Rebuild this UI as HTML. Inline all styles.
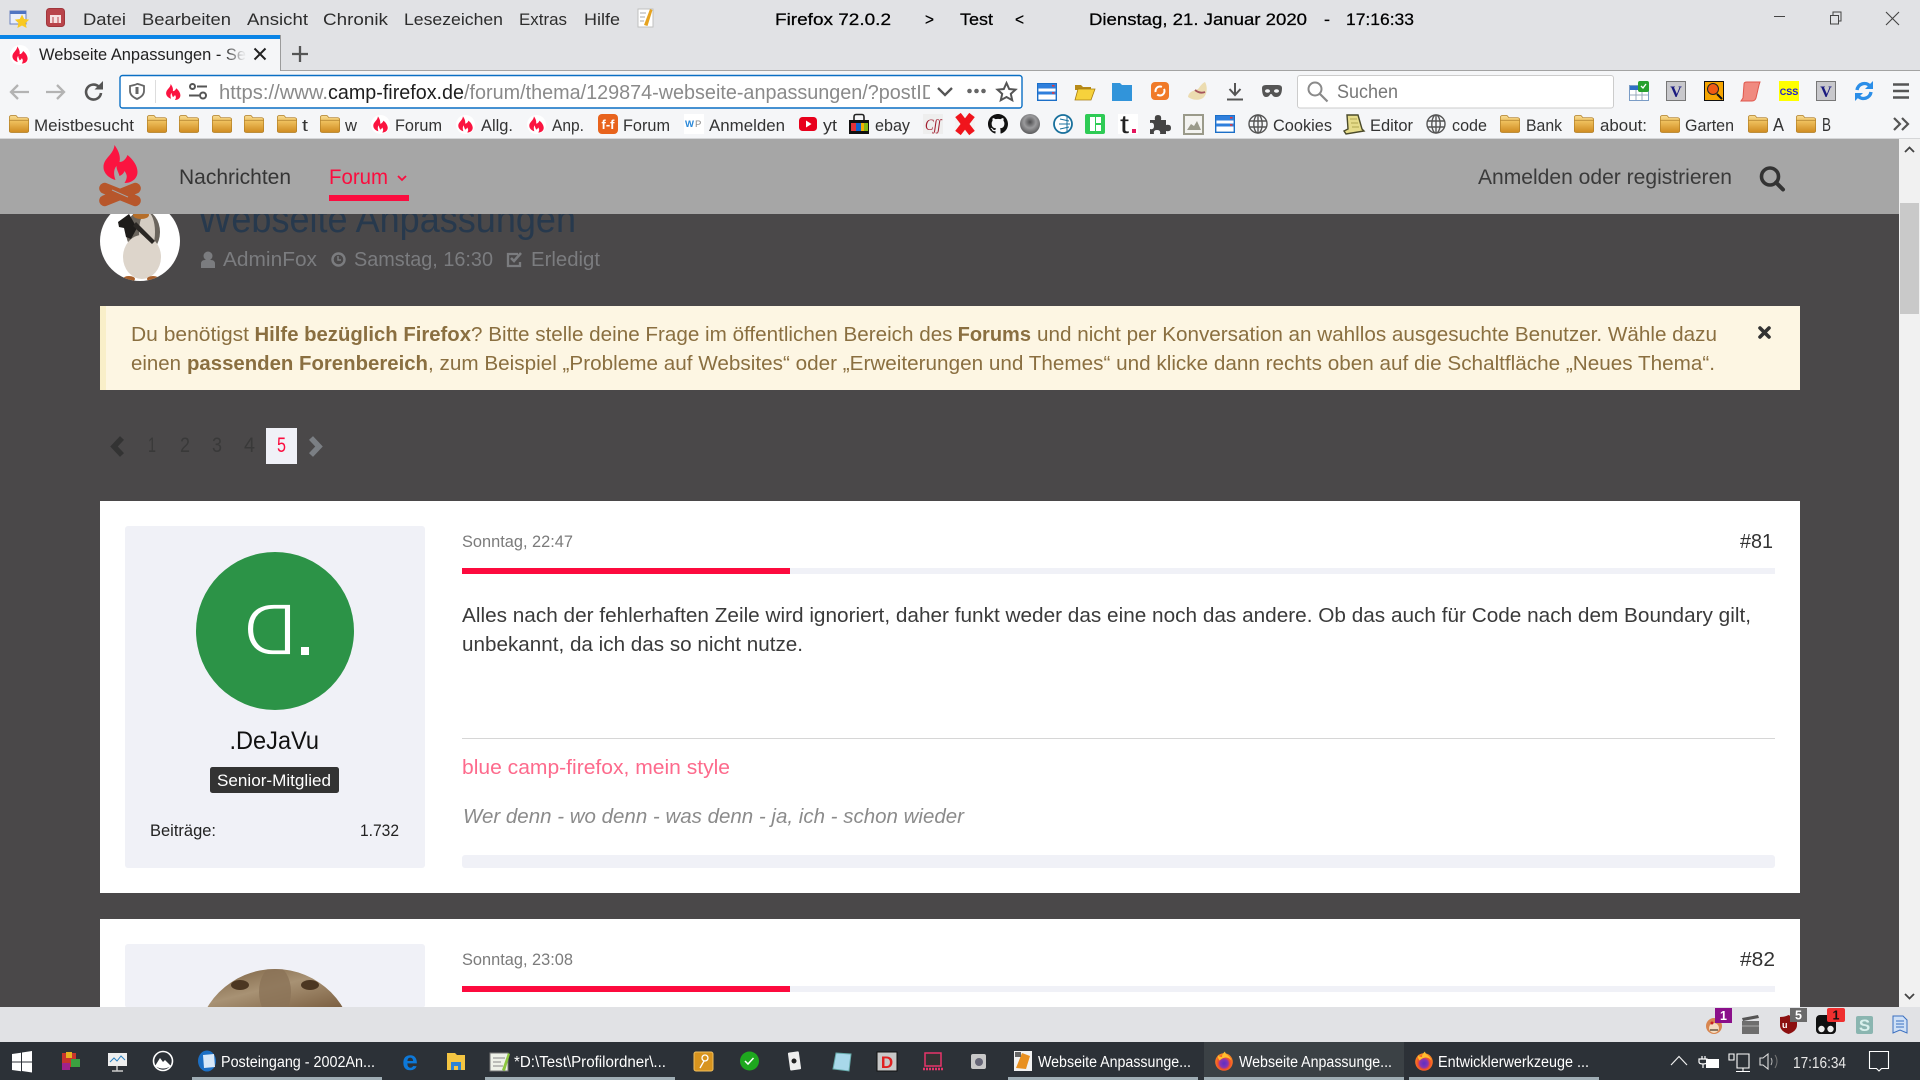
<!DOCTYPE html>
<html lang="de"><head><meta charset="utf-8"><title>Webseite Anpassungen</title>
<style>
html,body{margin:0;padding:0;width:1920px;height:1080px;overflow:hidden;background:#4a4849}
svg{display:block;font-family:"Liberation Sans",sans-serif}
</style></head><body>
<svg xmlns="http://www.w3.org/2000/svg" width="1920" height="1080" viewBox="0 0 1920 1080">
<defs>
<linearGradient id="fg" x1="0" y1="0" x2="0" y2="1"><stop offset="0" stop-color="#f7dc95"/><stop offset=".35" stop-color="#eebf5c"/><stop offset="1" stop-color="#cf8b20"/></linearGradient>
<radialGradient id="gc" cx=".5" cy=".4" r=".6"><stop offset="0" stop-color="#4d4d4f"/><stop offset=".5" stop-color="#9a9a9c"/><stop offset="1" stop-color="#5a5a5c"/></radialGradient>
<radialGradient id="fx" cx=".5" cy=".58" r=".62"><stop offset="0" stop-color="#5b2fc4"/><stop offset=".38" stop-color="#8a35b0"/><stop offset=".55" stop-color="#f2502a"/><stop offset="1" stop-color="#ff9a20"/></radialGradient>
<linearGradient id="fur" x1="0" y1="0" x2="1" y2="1"><stop offset="0" stop-color="#6d5233"/><stop offset=".5" stop-color="#a89274"/><stop offset="1" stop-color="#75583a"/></linearGradient>
<symbol id="fo" viewBox="0 0 20 18"><path d="M.3 3q0-2.500 2.200-2.500h4.500l2 2.200h8.500q2.200 0 2.200 2.300v10.500q0 2-2 2h-15q-2.400 0-2.400-2z" fill="url(#fg)" stroke="#b07d24" stroke-width=".7"/><path d="M.6 5.300h18.800" stroke="#b98a34" stroke-width=".8"/></symbol>
<symbol id="fl" viewBox="0 0 34 38"><path fill="#fb1440" d="M11 0C16 7 17 12 16 17C19 17 22 15 24 10C30 15 34 21 34 27C34 33 29 38 21 38C24 33 24 30 21 26C20 29 18 30 16 31C15 27 13 25 13 21C10 24 10 30 12 35C5 33 0 28 0 22C0 13 10 10 11 0z"/></symbol>
<symbol id="flc" viewBox="0 0 20 20"><circle cx="10" cy="10" r="10" fill="#fff"/><use href="#fl" x="2" y="1.500" width="16" height="17"/></symbol>
<symbol id="srv" viewBox="0 0 20 18"><rect x=".7" y=".7" width="18.600" height="16.600" fill="#fff" stroke="#1b6fc8" stroke-width="1.400"/><rect x="1" y="1" width="18" height="4.500" fill="#2f7fdc"/><rect x="1" y="8.500" width="18" height="3" fill="#2f7fdc"/><rect x="15" y="2" width="2.500" height="1.500" fill="#e33"/><rect x="15" y="9.200" width="2.500" height="1.500" fill="#e33"/></symbol>
<symbol id="glb" viewBox="0 0 20 20"><g fill="none" stroke="#555" stroke-width="1.400"><circle cx="10" cy="10" r="9"/><ellipse cx="10" cy="10" rx="4.200" ry="9"/><path d="M10 1v18M1.500 7h17M1.500 13h17"/></g></symbol>
<symbol id="vb" viewBox="0 0 20 20"><rect x=".5" y=".5" width="19" height="19" fill="#c8c8cc" stroke="#777"/><text x="10" y="16" font-family="Liberation Serif,serif" font-size="16" font-weight="700" fill="#1a1a80" text-anchor="middle">V</text></symbol>
<symbol id="ffx" viewBox="0 0 20 20"><circle cx="10" cy="11" r="8.800" fill="url(#fx)"/><path d="M4 4c1 2 3 2 4 2 0-2 1-4 3-5.500 0 3 5 4 6.500 9-3-4-8-4-12 0C4.500 8 3.500 6 4 4z" fill="#ffbd2e"/></symbol>
<clipPath id="uc"><rect x="215" y="78" width="715" height="28"/></clipPath>
<clipPath id="ac"><circle cx="140" cy="241" r="40"/></clipPath>
<clipPath id="a2"><circle cx="275" cy="1048" r="79"/></clipPath>
<linearGradient id="tf" x1="0" x2="1"><stop offset="0" stop-color="#f5f6f8" stop-opacity="0"/><stop offset=".8" stop-color="#f5f6f8" stop-opacity=".9"/><stop offset="1" stop-color="#f5f6f8"/></linearGradient>
</defs>

<!-- page -->
<rect x="0" y="138" width="1900" height="870" fill="#4a4849"/>

<!-- thread header -->
<circle cx="140" cy="241" r="40" fill="#fff"/>
<g clip-path="url(#ac)">
<ellipse cx="143" cy="232" rx="17" ry="22" fill="#6b655d"/>
<ellipse cx="147" cy="232" rx="8" ry="20" fill="#d4ccc2"/>
<ellipse cx="142" cy="257" rx="19" ry="22" fill="#ddd5cb"/>
<path d="M118 222l11-8 8 14-6 11-5-2-2-9-5-1z" fill="#1e1c1a"/>
<path d="M133 226l19 18 3-3-19-19z" fill="#2a2724"/>
<ellipse cx="129" cy="279" rx="6" ry="3" fill="#a8602c"/><ellipse cx="153" cy="279" rx="6" ry="3" fill="#a8602c"/>
<ellipse cx="141" cy="215" rx="8" ry="4" fill="#b56e2a"/>
</g>
<text x="198" y="232" font-size="38" fill="#27394d" textLength="378" lengthAdjust="spacingAndGlyphs">Webseite Anpassungen</text>
<g fill="#7b7c7f">
<circle cx="208" cy="256" r="4.500"/><path d="M201 268v-4q0-4 4-4h6q4 0 4 4v4z"/>
<circle cx="338.500" cy="259.500" r="6" fill="none" stroke="#7b7c7f" stroke-width="2.400"/><path d="M338 256v4h3" fill="none" stroke="#7b7c7f" stroke-width="1.500"/>
<path d="M520 262v4h-12v-12h10" fill="none" stroke="#7b7c7f" stroke-width="2.300"/><path d="M511 258l3 3 7-8" fill="none" stroke="#7b7c7f" stroke-width="2.600"/>
<text x="223" y="266" font-size="20" textLength="94" lengthAdjust="spacingAndGlyphs">AdminFox</text>
<text x="354" y="266" font-size="20" textLength="139" lengthAdjust="spacingAndGlyphs">Samstag, 16:30</text>
<text x="531" y="266" font-size="20" textLength="69" lengthAdjust="spacingAndGlyphs">Erledigt</text>
</g>

<!-- notice -->
<rect x="100" y="306" width="1700" height="84" fill="#fdf6e3"/>
<rect x="100" y="306" width="6" height="84" fill="#f9efc9"/>
<g font-size="20.500" fill="#8a6f40">
<text x="131" y="341" textLength="118" lengthAdjust="spacingAndGlyphs">Du benötigst</text>
<text x="254.500" y="341" font-weight="700" textLength="216.500" lengthAdjust="spacingAndGlyphs">Hilfe bezüglich Firefox</text>
<text x="471" y="341" textLength="481.500" lengthAdjust="spacingAndGlyphs">? Bitte stelle deine Frage im öffentlichen Bereich des</text>
<text x="957.600" y="341" font-weight="700" textLength="73.400" lengthAdjust="spacingAndGlyphs">Forums</text>
<text x="1037" y="341" textLength="680" lengthAdjust="spacingAndGlyphs">und nicht per Konversation an wahllos ausgesuchte Benutzer. Wähle dazu</text>
<text x="131" y="370" textLength="50" lengthAdjust="spacingAndGlyphs">einen</text>
<text x="187" y="370" font-weight="700" textLength="241" lengthAdjust="spacingAndGlyphs">passenden Forenbereich</text>
<text x="428" y="370" textLength="1287" lengthAdjust="spacingAndGlyphs">, zum Beispiel „Probleme auf Websites“ oder „Erweiterungen und Themes“ und klicke dann rechts oben auf die Schaltfläche „Neues Thema“.</text>
</g>
<path d="M1760 328l9 9M1769 328l-9 9" stroke="#333" stroke-width="3.600" stroke-linecap="round"/>

<!-- pagination -->
<path d="M122 438l-8 8.500 8 8.500" fill="none" stroke="#333" stroke-width="5.500"/>
<g font-size="21" fill="#393939">
<text x="148" y="452" textLength="8" lengthAdjust="spacingAndGlyphs">1</text>
<text x="180" y="452" textLength="10" lengthAdjust="spacingAndGlyphs">2</text>
<text x="212" y="452" textLength="10" lengthAdjust="spacingAndGlyphs">3</text>
<text x="244" y="452" textLength="11" lengthAdjust="spacingAndGlyphs">4</text>
</g>
<rect x="266" y="428" width="31" height="36" fill="#f0f1f7"/>
<text x="277" y="452" font-size="21" fill="#fb0d3f" textLength="9" lengthAdjust="spacingAndGlyphs">5</text>
<path d="M311 438l8 8.500-8 8.500" fill="none" stroke="#7b7f84" stroke-width="5.500"/>

<!-- post 81 -->
<rect x="100" y="501" width="1700" height="392" fill="#fff"/>
<rect x="125" y="526" width="300" height="342" rx="3" fill="#f0f1f7"/>
<circle cx="275" cy="631" r="79" fill="#2c9347"/>
<text transform="translate(297 655) scale(-1 1)" font-size="74" fill="#fff" stroke="#2c9347" stroke-width="1.800">D</text>
<rect x="301" y="647" width="8" height="8" fill="#fff"/>
<text x="229.500" y="749" font-size="25" fill="#111" textLength="89.500" lengthAdjust="spacingAndGlyphs">.DeJaVu</text>
<rect x="210" y="767" width="129" height="26" rx="2.500" fill="#333"/>
<text x="217" y="786" font-size="16.500" fill="#fff" textLength="114" lengthAdjust="spacingAndGlyphs">Senior-Mitglied</text>
<text x="150" y="836" font-size="16.500" fill="#222" textLength="66" lengthAdjust="spacingAndGlyphs">Beiträge:</text>
<text x="360" y="836" font-size="16.500" fill="#222" textLength="39" lengthAdjust="spacingAndGlyphs">1.732</text>

<text x="462" y="547" font-size="16.500" fill="#7b7b7b" textLength="111" lengthAdjust="spacingAndGlyphs">Sonntag, 22:47</text>
<text x="1740" y="548" font-size="20.500" fill="#333" textLength="33" lengthAdjust="spacingAndGlyphs">#81</text>
<rect x="462" y="568" width="1313" height="6" fill="#f0f1f7"/><rect x="462" y="568" width="328" height="6" fill="#fd0a3e"/>
<text x="462" y="622" font-size="20.500" fill="#3a3a3a" textLength="1289" lengthAdjust="spacingAndGlyphs">Alles nach der fehlerhaften Zeile wird ignoriert, daher funkt weder das eine noch das andere. Ob das auch für Code nach dem Boundary gilt,</text>
<text x="462" y="651" font-size="20.500" fill="#3a3a3a" textLength="341" lengthAdjust="spacingAndGlyphs">unbekannt, da ich das so nicht nutze.</text>
<rect x="462" y="738" width="1313" height="1" fill="#d6d6d6"/>
<text x="462" y="774" font-size="20.500" fill="#fd6a8c" textLength="268" lengthAdjust="spacingAndGlyphs">blue camp-firefox, mein style</text>
<text x="463" y="823" font-size="20.500" font-style="italic" fill="#8b8b8b" textLength="501" lengthAdjust="spacingAndGlyphs">Wer denn - wo denn - was denn - ja, ich - schon wieder</text>
<rect x="462" y="855" width="1313" height="13" rx="3" fill="#f0f1f7"/>

<!-- post 82 -->
<rect x="100" y="919" width="1700" height="89" fill="#fff"/>
<rect x="125" y="944" width="300" height="64" rx="3" fill="#f0f1f7"/>
<g clip-path="url(#a2)"><rect x="190" y="965" width="170" height="43" fill="url(#fur)"/>
<ellipse cx="275" cy="992" rx="16" ry="26" fill="#8b7358" opacity=".8"/><ellipse cx="240" cy="985" rx="9" ry="5" fill="#4c3722"/><ellipse cx="310" cy="985" rx="9" ry="5" fill="#4c3722"/></g>
<text x="462" y="965" font-size="16.500" fill="#7b7b7b" textLength="111" lengthAdjust="spacingAndGlyphs">Sonntag, 23:08</text>
<text x="1740" y="966" font-size="20.500" fill="#333" textLength="35" lengthAdjust="spacingAndGlyphs">#82</text>
<rect x="462" y="986" width="1313" height="6" fill="#f0f1f7"/><rect x="462" y="986" width="328" height="6" fill="#fd0a3e"/>

<!-- site nav -->
<rect x="0" y="139" width="1899" height="75" fill="#a6a6a6"/>
<use href="#fl" x="103.500" y="145" width="34" height="38"/>
<g fill="#b7562b"><rect x="98" y="189" width="44" height="11" rx="5.500" transform="rotate(22 120 194.500)"/><rect x="98" y="189" width="44" height="11" rx="5.500" transform="rotate(-22 120 194.500)"/></g>
<path d="M112 190l16 7" stroke="#a6a6a6" stroke-width="1"/>
<text x="179" y="184" font-size="21" fill="#353535" textLength="112" lengthAdjust="spacingAndGlyphs">Nachrichten</text>
<text x="329" y="184" font-size="21" fill="#fb0d3f" textLength="59" lengthAdjust="spacingAndGlyphs">Forum</text>
<path d="M398 176l4 4 4-4" fill="none" stroke="#fb0d3f" stroke-width="1.800"/>
<rect x="329" y="195" width="80" height="6" fill="#fb0d3f"/>
<text x="1478" y="184" font-size="21" fill="#3a3a3a" textLength="254" lengthAdjust="spacingAndGlyphs">Anmelden oder registrieren</text>
<circle cx="1770" cy="176.500" r="8.500" fill="none" stroke="#333" stroke-width="3.600"/><path d="M1776 182.500l7 7" stroke="#333" stroke-width="4" stroke-linecap="round"/>

<!-- scrollbar -->
<rect x="1899" y="138" width="21" height="870" fill="#f1f1f1"/>
<rect x="1900" y="203" width="19" height="111" fill="#c9c9c9"/>
<path d="M1905 152l4.500-4.500 4.500 4.500" fill="none" stroke="#444" stroke-width="1.800"/>
<path d="M1905 994l4.500 4.500 4.500-4.500" fill="none" stroke="#444" stroke-width="1.800"/>

<!-- browser chrome -->
<rect x="0" y="0" width="1920" height="70" fill="#e1e2e5"/>
<rect x="281" y="70" width="1639" height="1" fill="#a3a3a3"/>
<rect x="0" y="71" width="1920" height="67" fill="#f5f6f8"/>
<rect x="0" y="138" width="1920" height="1" fill="#d5d6d8"/>
<!-- title row -->
<rect x="10" y="11" width="16" height="13" fill="#e9eefb" stroke="#6a83c0"/><rect x="10" y="11" width="16" height="3" fill="#4f74c2"/>
<path d="M22 14.500l2.200 4.500 5 .6-3.600 3.400 1 5-4.600-2.500-4.600 2.500 1-5-3.600-3.400 5-.6z" fill="#f9c922"/>
<rect x="46.500" y="8.500" width="18" height="18" rx="3" fill="#b9444a" stroke="#a0363c"/><rect x="50" y="15" width="11" height="8" fill="#f6e2e2"/><path d="M53 17v6M58 17v6" stroke="#b9444a"/>
<g font-size="17" fill="#2d2d2d">
<text x="83" y="25" textLength="43" lengthAdjust="spacingAndGlyphs">Datei</text>
<text x="142" y="25" textLength="89" lengthAdjust="spacingAndGlyphs">Bearbeiten</text>
<text x="247" y="25" textLength="61" lengthAdjust="spacingAndGlyphs">Ansicht</text>
<text x="323" y="25" textLength="65" lengthAdjust="spacingAndGlyphs">Chronik</text>
<text x="404" y="25" textLength="99" lengthAdjust="spacingAndGlyphs">Lesezeichen</text>
<text x="519" y="25" textLength="48" lengthAdjust="spacingAndGlyphs">Extras</text>
<text x="584" y="25" textLength="36" lengthAdjust="spacingAndGlyphs">Hilfe</text>
</g>
<rect x="638" y="9" width="15" height="18" fill="#fff" stroke="#c0c0c0"/><path d="M644 25l6-16 2.500 1-5 16z" fill="#e6a320"/><path d="M640 13h6M640 17h5M640 21h4" stroke="#aaa"/>
<g font-size="17" fill="#000" stroke="#000" stroke-width=".25">
<text x="775" y="25" textLength="116" lengthAdjust="spacingAndGlyphs">Firefox 72.0.2</text>
<text x="925" y="25" textLength="9" lengthAdjust="spacingAndGlyphs">&gt;</text>
<text x="960" y="25" textLength="33" lengthAdjust="spacingAndGlyphs">Test</text>
<text x="1015" y="25" textLength="9" lengthAdjust="spacingAndGlyphs">&lt;</text>
<text x="1089" y="25" textLength="218" lengthAdjust="spacingAndGlyphs">Dienstag, 21. Januar 2020</text>
<text x="1324" y="25" textLength="6" lengthAdjust="spacingAndGlyphs">-</text>
<text x="1346" y="25" textLength="68" lengthAdjust="spacingAndGlyphs">17:16:33</text>
</g>
<path d="M1774 16.500h11" stroke="#444"/>
<path d="M1830.500 15.500h8v8.500h-8zM1833 15v-3h8v9h-2.500" fill="none" stroke="#444"/>
<path d="M1886 12l13 13M1899 12l-13 13" stroke="#444" stroke-width="1.100"/>
<!-- tab -->
<rect x="0" y="35" width="280" height="36" fill="#f5f6f8"/>
<rect x="0" y="35" width="280" height="4" fill="#0a84e6"/>
<rect x="280" y="35" width="1" height="36" fill="#9b9b9b"/>
<use href="#flc" x="10" y="45" width="20" height="20"/>
<text x="39" y="60" font-size="17" fill="#222" textLength="207" lengthAdjust="spacingAndGlyphs">Webseite Anpassungen - Se</text>
<rect x="224" y="40" width="24" height="28" fill="url(#tf)"/>
<path d="M254.500 48.500l11 11M265.500 48.500l-11 11" stroke="#222" stroke-width="2"/>
<path d="M300 46v16M292 54h16" stroke="#555" stroke-width="2.300"/>
<!-- nav row -->
<g fill="none" stroke="#b3b3b3" stroke-width="2.300"><path d="M29 92H11M18 85l-7 7 7 7"/><path d="M46 92h18M57 85l7 7-7 7"/></g>
<path d="M101 93a7.500 7.500 0 1 1-2.200-6.300" fill="none" stroke="#555" stroke-width="2.600"/><path d="M103 81v8.500h-8.500z" fill="#555"/>
<rect x="120" y="75.500" width="902" height="32.500" rx="2.500" fill="#fff" stroke="#0a6fc4" stroke-width="1.400"/>
<path d="M130 86q7-1.500 7-2t7 2v5q0 5-7 8-7-3-7-8z" fill="none" stroke="#666" stroke-width="1.800"/><path d="M135.500 87h3v7h-3z" fill="#666"/>
<rect x="155" y="80" width="1" height="23" fill="#ddd"/>
<use href="#fl" x="166" y="84" width="14.500" height="16"/>
<g fill="none" stroke="#555" stroke-width="2"><circle cx="192.500" cy="86.500" r="2.500"/><path d="M197 86.500h10M189 95.500h10"/><circle cx="203" cy="95.500" r="3"/></g>
<text x="219" y="99" font-size="20" fill="#8a8a8a" textLength="109" lengthAdjust="spacingAndGlyphs">https://www.</text>
<text x="328" y="99" font-size="20" fill="#1e1e1e" textLength="136" lengthAdjust="spacingAndGlyphs">camp-firefox.de</text>
<text x="464" y="99" font-size="20" fill="#8a8a8a" clip-path="url(#uc)" textLength="472" lengthAdjust="spacingAndGlyphs">/forum/thema/129874-webseite-anpassungen/?postID</text>
<path d="M938 88l7 7 7-7" fill="none" stroke="#555" stroke-width="2.300"/>
<g fill="#666"><circle cx="969.500" cy="91" r="2.300"/><circle cx="976.500" cy="91" r="2.300"/><circle cx="983.500" cy="91" r="2.300"/></g>
<path d="M1006.500 83l2.700 6 6.300.6-4.700 4.300 1.400 6.300-5.700-3.200-5.700 3.200 1.400-6.300-4.700-4.300 6.300-.6z" fill="none" stroke="#555" stroke-width="2"/>
<use href="#srv" x="1037" y="83" width="20" height="18"/>
<path d="M1075 85h6l2 2h8v3h-16z" fill="#b78a18"/><path d="M1075 100l3-11h17l-4 11z" fill="#f6d23c" stroke="#a87d10" stroke-width=".8"/>
<path d="M1112 83h8l2 2h10v16h-20z" fill="#3194da"/>
<rect x="1151" y="82" width="18" height="18" rx="4" fill="#f07a28"/><circle cx="1160" cy="91" r="4.500" fill="none" stroke="#fff" stroke-width="2" stroke-dasharray="10 3"/>
<path d="M1188 97c1-6 6-6 10-8 2-2 3-5 7-7 3 5 2 13-2 16-5 3-11 2-15-1z" fill="#ecdcb0"/><path d="M1195 90q5 4 10 2" stroke="#a5545c" stroke-width="1.800" fill="none"/>
<path d="M1235 83v11M1229.500 89l5.500 6 5.500-6M1227 99.500h16" fill="none" stroke="#555" stroke-width="2"/>
<path d="M1262 88q0-3 4-3h12q4 0 4 3 0 9-6 9-3 0-4-2.500-1-1-2 0-1 2.500-4 2.500-4 0-4-9z" fill="#555"/><ellipse cx="1267.500" cy="91" rx="2.500" ry="1.800" fill="#f5f6f8"/><ellipse cx="1276.500" cy="91" rx="2.500" ry="1.800" fill="#f5f6f8"/>
<rect x="1297.500" y="75.500" width="316" height="32.500" rx="2.500" fill="#fff" stroke="#ccc"/>
<circle cx="1315" cy="89" r="6.500" fill="none" stroke="#8a8a8a" stroke-width="2"/><path d="M1320 94l7.500 7.500" stroke="#8a8a8a" stroke-width="2.200"/>
<text x="1337" y="98" font-size="19" fill="#777" textLength="61" lengthAdjust="spacingAndGlyphs">Suchen</text>
<rect x="1629.500" y="85.500" width="19" height="15" fill="#fff" stroke="#7a9cc6"/><rect x="1630" y="86" width="9" height="4" fill="#2e6fc6"/><path d="M1630 95h18M1636 90v10M1642 90v10" stroke="#9ab"/>
<rect x="1638" y="81" width="11" height="11" rx="2" fill="#27a02e"/><path d="M1641 86l2 2 3-4" stroke="#fff" stroke-width="1.300" fill="none"/>
<use href="#vb" x="1666" y="81" width="20" height="20"/>
<rect x="1704.500" y="81.500" width="19" height="19" fill="#f6a500" stroke="#111"/><circle cx="1713" cy="89" r="5.500" fill="#f05a14" stroke="#222"/><path d="M1717 94l5 5" stroke="#111" stroke-width="2"/>
<path d="M1744 84q0-2 3-2h13l-1 3-3 13q-1 3-4 3h-11l2-3z" fill="#f08a80" stroke="#e0574c"/>
<rect x="1779" y="81" width="20" height="20" fill="#ff0"/><text x="1789" y="95" font-size="9" font-weight="700" fill="#1a1ad0" text-anchor="middle">CSS</text>
<use href="#vb" x="1816" y="81" width="20" height="20"/>
<g fill="none" stroke="#2b8ee8" stroke-width="3.400"><path d="M1857 90a7.500 7.500 0 0 1 13-4"/><path d="M1871 92a7.500 7.500 0 0 1-13 4"/></g>
<path d="M1873 81v8h-8zM1855 101v-8h8z" fill="#2b8ee8"/>
<path d="M1893 84.500h16M1893 91h16M1893 97.500h16" stroke="#555" stroke-width="2.400"/>
<!-- bookmarks -->
<g>
<use href="#fo" x="9" y="115" width="20" height="18"/>
<use href="#fo" x="147" y="115" width="20" height="18"/>
<use href="#fo" x="179" y="115" width="20" height="18"/>
<use href="#fo" x="212" y="115" width="20" height="18"/>
<use href="#fo" x="244" y="115" width="20" height="18"/>
<use href="#fo" x="277" y="115" width="20" height="18"/>
<use href="#fo" x="320" y="115" width="20" height="18"/>
<use href="#fo" x="1500" y="115" width="20" height="18"/>
<use href="#fo" x="1574" y="115" width="20" height="18"/>
<use href="#fo" x="1660" y="115" width="20" height="18"/>
<use href="#fo" x="1748" y="115" width="20" height="18"/>
<use href="#fo" x="1796" y="115" width="20" height="18"/>
<use href="#flc" x="371" y="115" width="19" height="19"/>
<use href="#flc" x="456" y="115" width="19" height="19"/>
<use href="#flc" x="527" y="115" width="19" height="19"/>
<rect x="598" y="114" width="20" height="20" rx="4" fill="#e8631d"/><text x="608" y="129" font-size="13" font-weight="700" fill="#fff" text-anchor="middle">f-f</text>
<rect x="684" y="114" width="20" height="20" fill="#fff"/><text x="685" y="127" font-size="9.500" font-weight="700" fill="#2a88d8">W</text><text x="695" y="127" font-size="9.500" fill="#888">P</text>
<rect x="799" y="117" width="18" height="14" rx="3.500" fill="#e8001c"/><path d="M806 120.500v7l5.500-3.500z" fill="#fff"/>
<path d="M854 120v-3q0-2.500 2-2.500h6q2 0 2 2.500v3" fill="none" stroke="#222" stroke-width="1.600"/><rect x="849" y="120" width="20" height="14" fill="#111"/><rect x="851" y="123" width="5" height="8" fill="#e53238"/><rect x="856" y="123" width="5" height="8" fill="#0f64d2"/><rect x="861" y="123" width="3" height="8" fill="#f5af02"/><rect x="864" y="123" width="4" height="8" fill="#86b817"/>
<rect x="923" y="114" width="20" height="20" fill="#eee"/><text x="925" y="130" font-size="16" font-style="italic" font-family="Liberation Serif,serif" fill="#a21e30" textLength="16" lengthAdjust="spacingAndGlyphs">Cʃʃ</text>
<rect x="955" y="114" width="20" height="20" fill="#f3f3f3"/><path d="M958 115l14 18M972 115l-14 18" stroke="#f0141c" stroke-width="7"/>
<svg x="988" y="114" width="20" height="20" viewBox="0 0 16 16"><path fill="#111" d="M8 0C3.580 0 0 3.580 0 8c0 3.540 2.290 6.530 5.470 7.590.4.070.55-.17.55-.38 0-.19-.01-.82-.01-1.490-2.010.37-2.530-.49-2.690-.94-.09-.23-.48-.94-.82-1.130-.28-.15-.68-.52-.01-.53.63-.01 1.080.58 1.230.82.72 1.210 1.870.87 2.330.66.07-.52.28-.87.51-1.070-1.780-.2-3.640-.89-3.640-3.950 0-.87.31-1.590.82-2.150-.08-.2-.36-1.020.08-2.120 0 0 .67-.21 2.200.82.64-.18 1.320-.27 2-.27.68 0 1.360.09 2 .27 1.530-1.040 2.200-.82 2.200-.82.44 1.100.16 1.920.08 2.120.51.56.82 1.270.82 2.150 0 3.070-1.870 3.750-3.650 3.950.29.25.54.73.54 1.480 0 1.070-.01 1.930-.01 2.200 0 .21.15.46.55.38A8.013 8.013 0 0 0 16 8c0-4.420-3.580-8-8-8z"/></svg>
<circle cx="1030" cy="124" r="10" fill="url(#gc)"/>
<circle cx="1063" cy="124" r="9" fill="#fff" stroke="#18709c" stroke-width="1.800"/><path d="M1067 116v16M1060 119l9 2M1059 124l11 0M1060 129l9-2" stroke="#18709c" fill="none"/>
<rect x="1085" y="114" width="20" height="20" rx="2" fill="#2ecb55"/><rect x="1090" y="117" width="5" height="14" fill="#fff"/><rect x="1096" y="117" width="5" height="6" fill="#fff"/><rect x="1096" y="125" width="5" height="6" fill="#fff"/>
<rect x="1118" y="114" width="20" height="20" fill="#fff"/><text x="1120" y="133" font-size="26" fill="#222" textLength="9" lengthAdjust="spacingAndGlyphs">t</text><rect x="1132" y="129" width="4" height="4" fill="#e4145c"/>
<path d="M1150 120h5q-1-5 3-5t3 5h5v5q5-1 5 3t-5 3v3h-6q1-4-3-4t-3 4h-4v-5q4 1 4-3t-4-3z" fill="#444"/>
<rect x="1184" y="115" width="19" height="19" fill="#f3f3f0" stroke="#9a9a8a" stroke-width="2"/><path d="M1187 130l4-6 3 2 3-5 4 9z" fill="#9a9a8a"/>
<use href="#srv" x="1215" y="115" width="20" height="18"/>
<use href="#glb" x="1248" y="114" width="20" height="20"/>
<use href="#glb" x="1426" y="114" width="20" height="20"/>
<path d="M1347 115h11l4 14 2 2-18 3-2-3 4-2z" fill="#e6dc8a" stroke="#4a4a2a" stroke-width="1.400"/><path d="M1350 119h7M1351 123h7M1352 127h7" stroke="#b0a650"/>
<g font-size="17" fill="#333">
<text x="34" y="131" textLength="100" lengthAdjust="spacingAndGlyphs">Meistbesucht</text>
<text x="302" y="131" textLength="6" lengthAdjust="spacingAndGlyphs">t</text>
<text x="345" y="131" textLength="12" lengthAdjust="spacingAndGlyphs">w</text>
<text x="395" y="131" textLength="47" lengthAdjust="spacingAndGlyphs">Forum</text>
<text x="481" y="131" textLength="32" lengthAdjust="spacingAndGlyphs">Allg.</text>
<text x="552" y="131" textLength="32" lengthAdjust="spacingAndGlyphs">Anp.</text>
<text x="623" y="131" textLength="47" lengthAdjust="spacingAndGlyphs">Forum</text>
<text x="709" y="131" textLength="76" lengthAdjust="spacingAndGlyphs">Anmelden</text>
<text x="823" y="131" textLength="14" lengthAdjust="spacingAndGlyphs">yt</text>
<text x="875" y="131" textLength="35" lengthAdjust="spacingAndGlyphs">ebay</text>
<text x="1273" y="131" textLength="59" lengthAdjust="spacingAndGlyphs">Cookies</text>
<text x="1370" y="131" textLength="43" lengthAdjust="spacingAndGlyphs">Editor</text>
<text x="1452" y="131" textLength="35" lengthAdjust="spacingAndGlyphs">code</text>
<text x="1526" y="131" textLength="36" lengthAdjust="spacingAndGlyphs">Bank</text>
<text x="1600" y="131" textLength="47" lengthAdjust="spacingAndGlyphs">about:</text>
<text x="1685" y="131" textLength="49" lengthAdjust="spacingAndGlyphs">Garten</text>
<text x="1773" y="131" font-size="18" textLength="11" lengthAdjust="spacingAndGlyphs">A</text>
<text x="1822" y="131" font-size="18" textLength="9" lengthAdjust="spacingAndGlyphs">B</text>
</g>
<path d="M1894 118l6 6-6 6M1902 118l6 6-6 6" fill="none" stroke="#555" stroke-width="2.200"/>
</g>

<!-- status bar -->
<rect x="0" y="1007" width="1920" height="35" fill="#e1e2e5"/>
<circle cx="1714" cy="1026" r="8" fill="#d88650"/><circle cx="1714" cy="1028" r="5" fill="#f4dcc0"/><circle cx="1712" cy="1023" r="1.500" fill="#c22"/><path d="M1710 1030h8" stroke="#432" stroke-width="1.200"/>
<rect x="1715" y="1008" width="17" height="15" fill="#8a0f8a"/><text x="1723.500" y="1020" font-size="12.500" font-weight="700" fill="#fff" text-anchor="middle">1</text>
<rect x="1742" y="1021" width="17" height="13" fill="#6e6e6e"/><path d="M1742 1018l16-3 1 3-16 3z" fill="#555"/><path d="M1742 1026h17" stroke="#aaa"/>
<path d="M1780 1017q5 0 8.500-2 3.500 2 8.500 2v8q0 6-8.500 9-8.500-3-8.500-9z" fill="#8c1010"/><text x="1782" y="1028" font-size="9" font-weight="700" fill="#fff">u</text>
<rect x="1790" y="1008" width="17" height="14" fill="#6a6a6a"/><text x="1798.500" y="1019.500" font-size="12.500" font-weight="700" fill="#fff" text-anchor="middle">5</text>
<rect x="1816" y="1015" width="20" height="19" rx="4" fill="#111"/><circle cx="1821.500" cy="1029" r="3.200" fill="#eee"/><circle cx="1830.500" cy="1029" r="3.200" fill="#eee"/>
<rect x="1827" y="1008" width="18" height="14" rx="2" fill="#ef2f2f"/><text x="1836" y="1019.500" font-size="12.500" font-weight="700" fill="#111" text-anchor="middle">1</text>
<rect x="1856" y="1016" width="17" height="18" rx="2" fill="#8ab5b0"/><text x="1864.500" y="1031" font-size="17" font-weight="700" fill="#d8f0ec" text-anchor="middle">S</text>
<path d="M1893 1016h10l4 4v13l-7-3-7 3z" fill="#cfe0f6" stroke="#3a6fc0"/><path d="M1896 1021h8M1896 1024h8M1896 1027h8" stroke="#3a6fc0"/>

<!-- taskbar -->
<rect x="0" y="1042" width="1920" height="38" fill="#2c3137"/>
<rect x="1204" y="1042" width="200" height="38" fill="#3b4145"/>
<g fill="#9fadb4"><rect x="192" y="1077" width="190" height="3"/><rect x="485" y="1077" width="190" height="3"/><rect x="1008" y="1077" width="190" height="3"/><rect x="1204" y="1077" width="200" height="3"/><rect x="1409" y="1077" width="190" height="3"/></g>
<g fill="#fff"><path d="M12 1054l9-1.300v8.800h-9zM22 1052.500l10-1.500v10.500h-10zM12 1062.500h9v8.800l-9-1.300zM22 1062.500h10v10l-10-1.500z"/></g>
<rect x="62" y="1053" width="14" height="14" fill="#c8342c"/><rect x="66" y="1052" width="6" height="6" fill="#e8b020"/><rect x="71" y="1059" width="9" height="8" fill="#3ca040"/><rect x="62" y="1063" width="8" height="7" fill="#a0228c"/>
<rect x="108" y="1053" width="19" height="13" fill="#eee"/><path d="M110 1062l4-4 3 3 4-5 4 4" stroke="#2a80c0" fill="none"/><path d="M117 1066v5M112 1071h11" stroke="#ccc" stroke-width="1.500"/>
<circle cx="163" cy="1061" r="9.500" fill="none" stroke="#fff" stroke-width="1.600"/><path d="M155 1066l5-8 3 4 2-2 6 6q-8 5-16 0z" fill="#fff"/>
<ellipse cx="207" cy="1061" rx="9" ry="10.500" fill="#1c6fc4"/><path d="M203 1055l11-1 1 13-11 1z" fill="#d8e8f8"/>
<text x="221" y="1067" font-size="15.500" fill="#fff" textLength="154" lengthAdjust="spacingAndGlyphs">Posteingang - 2002An...</text>
<text x="410" y="1070" font-size="28" font-weight="700" fill="#0d78d8" text-anchor="middle" font-family="Liberation Sans,sans-serif">e</text>
<path d="M447 1053h8l2 2h8v15h-18z" fill="#f4c542"/><rect x="451" y="1062" width="10" height="8" fill="#2c82d4"/><rect x="454" y="1066" width="4" height="4" fill="#f4c542"/>
<rect x="490" y="1053" width="18" height="18" fill="#eef1e8" stroke="#777"/><path d="M493 1058h12M493 1062h8M493 1066h10" stroke="#888"/><path d="M502 1070l6-17 2 1-5 17z" fill="#8cc63f"/>
<text x="514" y="1067" font-size="15.500" fill="#fff" textLength="152" lengthAdjust="spacingAndGlyphs">*D:\Test\Profilordner\...</text>
<rect x="694" y="1052" width="19" height="19" rx="2" fill="#d8941e" stroke="#f0c060"/><circle cx="705" cy="1058" r="3" fill="none" stroke="#fff" stroke-width="1.300"/><path d="M704 1061l-4 7" stroke="#fff" stroke-width="1.300"/>
<circle cx="749.500" cy="1061" r="9.500" fill="#1ea81e"/><path d="M745 1061l3 3 5.500-6" stroke="#fff" stroke-width="1.500" fill="none"/>
<rect x="789" y="1052" width="11" height="18" rx="1" fill="#eee" transform="rotate(-8 794 1061)"/><circle cx="794" cy="1061" r="2.500" fill="#222"/>
<path d="M836 1053l15 1-2 17-16-2z" fill="#a8d8ea" stroke="#6aa"/>
<rect x="877" y="1052" width="20" height="19" fill="#c8c8c8" stroke="#111"/><text x="887" y="1068" font-size="17" font-weight="700" fill="#e02020" text-anchor="middle">D</text>
<rect x="925" y="1053" width="16" height="13" fill="#333" stroke="#e8346a" stroke-width="1.500"/><path d="M923 1069h20" stroke="#e8346a" stroke-width="2.500" stroke-dasharray="2 1"/>
<rect x="971" y="1054" width="15" height="15" rx="2" fill="#c8c8c8"/><circle cx="979" cy="1062" r="4" fill="#667"/>
<rect x="1014" y="1051" width="18" height="20" fill="#f2f2f2"/><path d="M1016 1068l6-15 8 3-4 13z" fill="#e89020"/><rect x="1015" y="1052" width="6" height="5" fill="#666"/>
<text x="1038" y="1067" font-size="15.500" fill="#fff" textLength="153" lengthAdjust="spacingAndGlyphs">Webseite Anpassunge...</text>
<use href="#ffx" x="1214" y="1051" width="20" height="20"/>
<text x="1239" y="1067" font-size="15.500" fill="#fff" textLength="153" lengthAdjust="spacingAndGlyphs">Webseite Anpassunge...</text>
<use href="#ffx" x="1414" y="1051" width="20" height="20"/>
<text x="1438" y="1067" font-size="15.500" fill="#fff" textLength="151" lengthAdjust="spacingAndGlyphs">Entwicklerwerkzeuge ...</text>
<path d="M1671 1065l8-8.500 8 8.500" fill="none" stroke="#eee" stroke-width="1.200"/>
<path d="M1699 1059h3v-3M1705 1056v3M1699 1059h8v3q0 2-4 2t-4-2zM1703 1064v4" fill="none" stroke="#fff" stroke-width="1.200"/><rect x="1706.500" y="1059.500" width="12" height="8" fill="#fff" stroke="#fff"/>
<path d="M1737 1054h12v14h-12zM1743 1068v3M1736 1071.500h14M1729 1054h5v6h-5z" fill="none" stroke="#fff" stroke-width="1.100"/>
<path d="M1760 1058h3l5-4v15l-5-4h-3z" fill="none" stroke="#ddd" stroke-width="1.100"/><path d="M1771 1058q2 3 0 7" fill="none" stroke="#bbb"/><path d="M1775 1055q4 6 0 13" fill="none" stroke="#777"/>
<text x="1793" y="1068" font-size="15.500" fill="#e8e8e8" textLength="53" lengthAdjust="spacingAndGlyphs">17:16:34</text>
<path d="M1869.500 1051.500h19v17h-7l-2.500 2.500-2.500-2.500h-7z" fill="none" stroke="#fff" stroke-width="1.100"/>
</svg>
</body></html>
